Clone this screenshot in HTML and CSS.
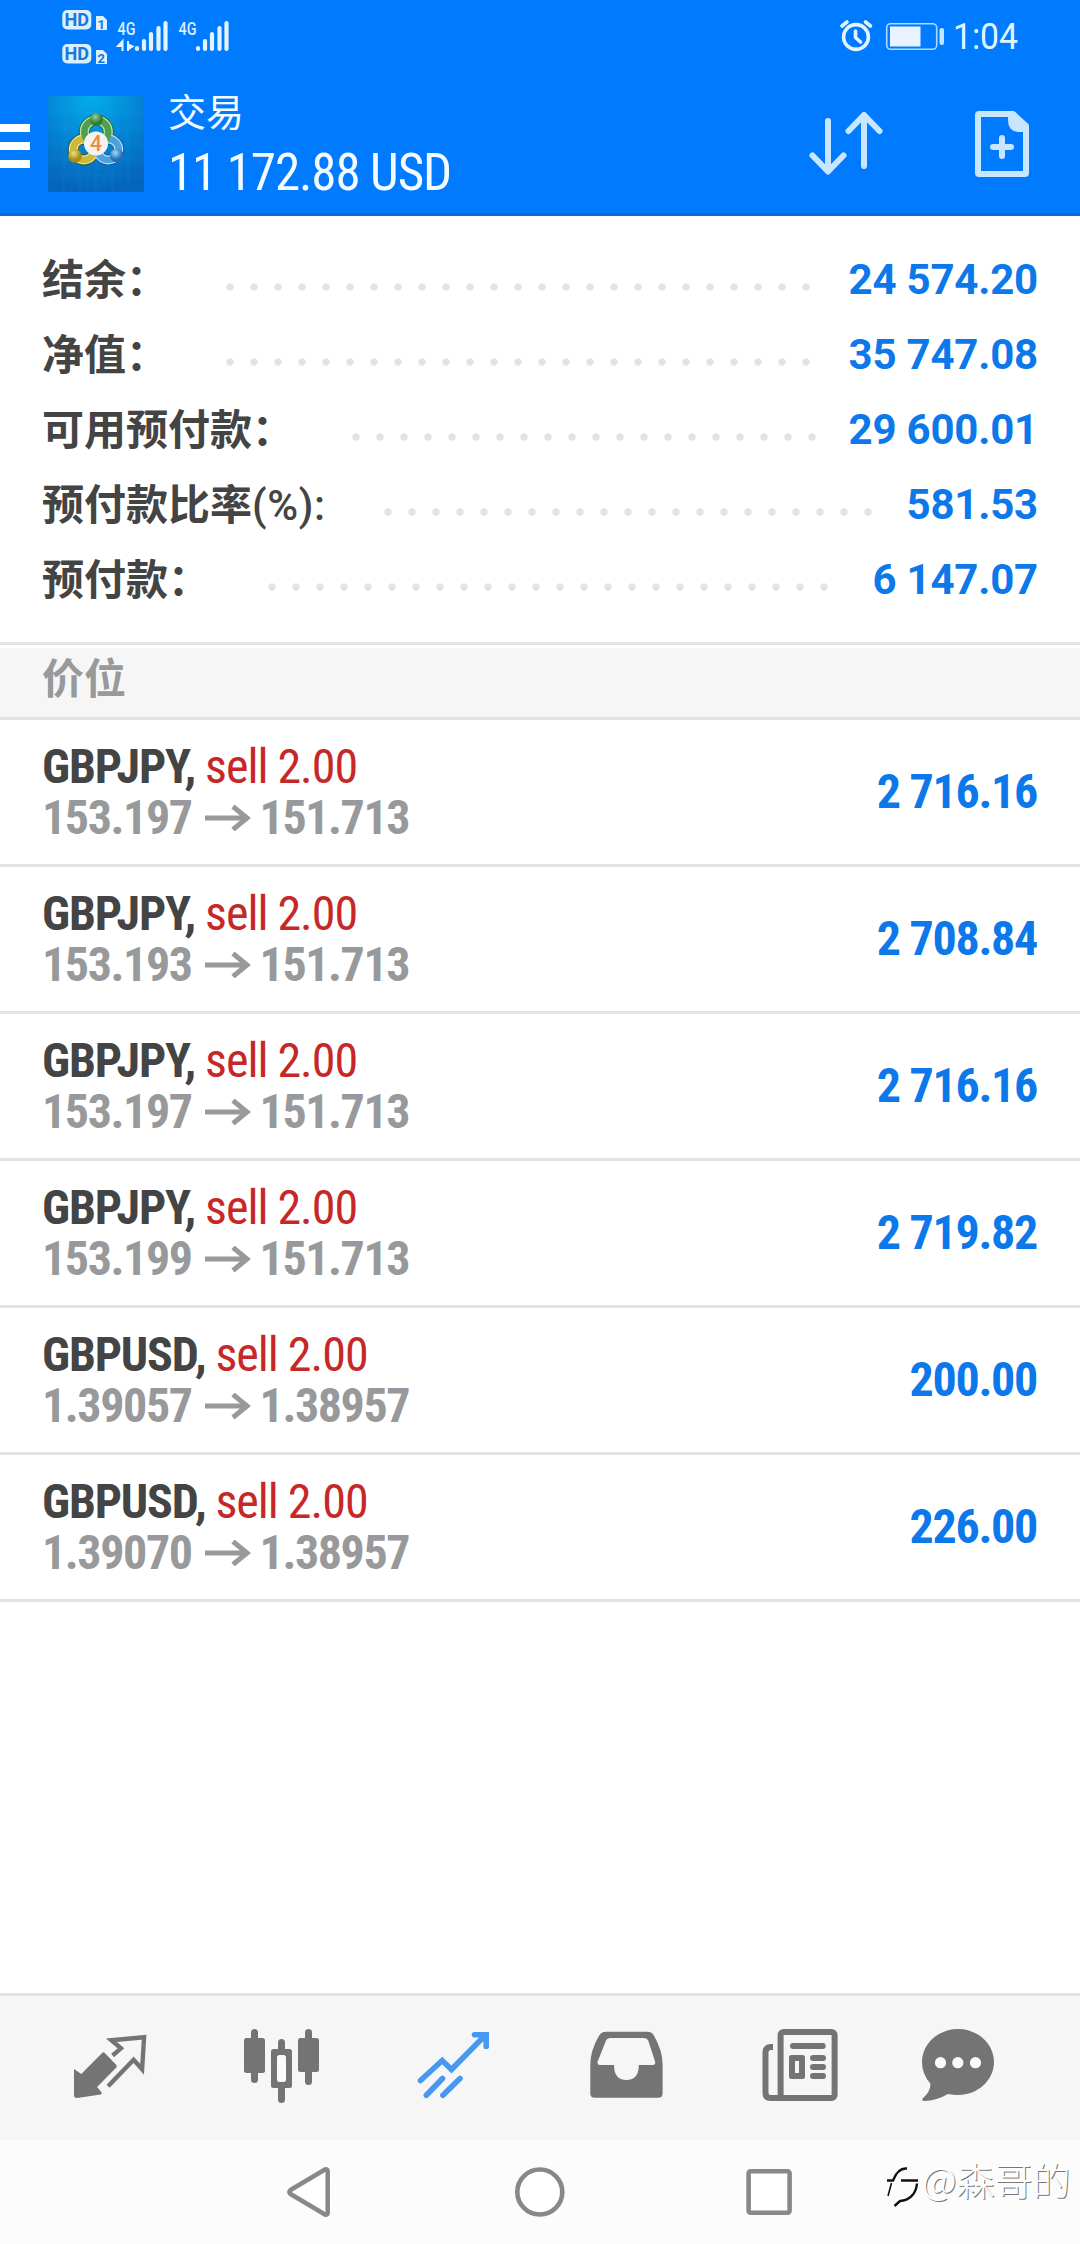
FILE: index.html
```html
<!DOCTYPE html>
<html lang="zh-CN">
<head>
<meta charset="utf-8">
<title>交易</title>
<link rel="stylesheet" href="styles.css">
</head>
<body>
<div class="screen">
  <header class="header">
    <div class="status">
      <svg class="status-left" viewBox="60 0 180 72" width="180" height="72">
        <g fill="#d8f0ff">
          <rect x="62.3" y="10" width="29" height="19.5" rx="5"/>
          <rect x="62.3" y="44" width="29" height="19.5" rx="5"/>
          <path d="M96 16h7l4 4v10H96zM96 50h7l4 4v10H96z"/>
        </g>
        <g class="hd"><text x="64.6" y="26.3" textLength="24.5" lengthAdjust="spacingAndGlyphs">HD</text><text x="64.6" y="60.3" textLength="24.5" lengthAdjust="spacingAndGlyphs">HD</text></g>
        <g class="sim"><text x="97.6" y="28.5">1</text><text x="97.6" y="62.5">2</text></g>
        <g class="net"><text x="117.5" y="34.5" textLength="18" lengthAdjust="spacingAndGlyphs">4G</text><text x="178.5" y="34.5" textLength="18" lengthAdjust="spacingAndGlyphs">4G</text></g>
        <g fill="none" stroke="#e2f5ff" stroke-width="4.2" stroke-linecap="round">
          <path d="M137 48v1M144 41v8M151 34v15M158.500 28v21M165.500 23v26"/>
          <path d="M198 48v1M205 41v8M212 34v15M219.500 28v21M226.500 23v26"/>
        </g>
        <path d="M122.500 51V41l-4.500 5h4.500M128 41v10M128 44.500l4.500 2-4.500 3z" fill="#e2f5ff" stroke="#e2f5ff" stroke-width="2"/>
      </svg>
      <svg class="status-right" viewBox="836 0 190 72" width="190" height="72">
        <g fill="none" stroke="#e2f5ff" stroke-width="3.600" stroke-linecap="round" stroke-linejoin="round">
          <circle cx="856" cy="37" r="12.400"/>
          <path d="M855.500 31v6.500l5 4.500M842 26l5-4M865.500 22l5 4"/>
        </g>
        <rect x="886.700" y="23.700" width="50" height="25.600" rx="4" fill="none" stroke="#a9dcff" stroke-width="1.600"/>
        <rect x="890" y="26.500" width="30.500" height="20" fill="#e8f3ff"/>
        <rect x="939.500" y="28" width="4.500" height="17" rx="2" fill="#c3e6ff"/>
        <text class="clock" x="953" y="49" textLength="65" lengthAdjust="spacingAndGlyphs">1:04</text>
      </svg>
    </div>
    <div class="appbar">
      <svg class="menu" viewBox="0 120 30 52" width="30" height="52"><path d="M0 124h30v8H0zM0 142h30v8H0zM0 160h30v8H0z" fill="#fff"/></svg>
      <svg class="logo" viewBox="48 96 96 96" width="96" height="96">
        <defs>
          <radialGradient id="sky" cx=".45" cy="0" r="1"><stop offset="0" stop-color="#03aeea"/><stop offset=".5" stop-color="#0484d4"/><stop offset="1" stop-color="#0564bb"/></radialGradient>
          <radialGradient id="green" cx=".4" cy=".3"><stop offset="0" stop-color="#9bcf96"/><stop offset="1" stop-color="#2c7e33"/></radialGradient>
          <radialGradient id="gold" cx=".4" cy=".3"><stop offset="0" stop-color="#f0e07a"/><stop offset="1" stop-color="#a58a18"/></radialGradient>
          <radialGradient id="blue" cx=".4" cy=".3"><stop offset="0" stop-color="#a4dafa"/><stop offset="1" stop-color="#1c73b8"/></radialGradient>
        </defs>
        <rect x="48" y="96" width="96" height="96" rx="2" fill="url(#sky)"/>
        <path d="M64 96v96M80 96v96M96 96v96M112 96v96M128 96v96M48 112h96M48 128h96M48 144h96M48 160h96M48 176h96" stroke="#39b8ea" stroke-opacity=".13" fill="none"/>
        <g fill="none" stroke-width="11">
          <circle cx="83.800" cy="149.500" r="10.500" stroke="#2d5a3c"/>
          <circle cx="108.200" cy="149.500" r="10.500" stroke="#155a94"/>
          <circle cx="96.300" cy="132" r="12" stroke="#226b3a"/>
        </g>
        <g fill="none" stroke-width="9">
          <circle cx="83.800" cy="149.500" r="10.500" stroke="#e6e4a0"/>
          <circle cx="108.200" cy="149.500" r="10.500" stroke="#b6e0f7"/>
          <circle cx="96.300" cy="132" r="12" stroke="#bfe0b0"/>
        </g>
        <g fill="none" stroke-width="6.500">
          <circle cx="83.800" cy="149.500" r="10.500" stroke="#cdb83a"/>
          <circle cx="108.200" cy="149.500" r="10.500" stroke="#4aa3dc"/>
          <circle cx="96.300" cy="132" r="12" stroke="#4f9f50"/>
        </g>
        <circle cx="96.500" cy="119.500" r="6.500" fill="url(#green)"/>
        <circle cx="75" cy="156" r="6.800" fill="url(#gold)"/>
        <circle cx="116.700" cy="155.500" r="6.800" fill="url(#blue)"/>
        <circle cx="96" cy="143.500" r="12" fill="#f5f3f2"/>
        <text class="logo-num" x="90" y="151" textLength="12" lengthAdjust="spacingAndGlyphs">4</text>
      </svg>
      <div class="titles">
        <div class="title">交易</div>
        <div class="total cond">11 172.88 USD</div>
      </div>
      <svg class="sort" viewBox="806 108 80 72" width="80" height="72">
        <path d="M828 121v50M812.500 155.500L828 171.500l15.500-16M864 166v-51M848.500 131L864 115l15.500 16" fill="none" stroke="#c9e6ff" stroke-width="6" stroke-linecap="round" stroke-linejoin="round"/>
      </svg>
      <svg class="new" viewBox="970 108 64 72" width="64" height="72">
        <path d="M979 114h34l13 12v47q0 1-1 1h-46q-1 0-1-1v-58q0-1 1-1z" fill="none" stroke="#c9e6ff" stroke-width="6" stroke-linejoin="round"/>
        <path d="M1008 114h6l13 13v5h-9q-10-1-10-12z" fill="#c9e6ff"/>
        <path d="M1002 138v18M993 147h18" stroke="#c9e6ff" stroke-width="6" stroke-linecap="round"/>
      </svg>
    </div>
  </header>

  <section class="summary">
    <div class="line"><span class="label">结余：</span><span class="dots"></span><span class="value">24 574.20</span></div>
    <div class="line"><span class="label">净值：</span><span class="dots"></span><span class="value">35 747.08</span></div>
    <div class="line"><span class="label">可用预付款：</span><span class="dots"></span><span class="value">29 600.01</span></div>
    <div class="line"><span class="label">预付款比率<span class="latin">(%):</span></span><span class="dots"></span><span class="value">581.53</span></div>
    <div class="line"><span class="label">预付款：</span><span class="dots"></span><span class="value">6 147.07</span></div>
  </section>

  <h2 class="section">价位</h2>

  <main class="positions">
    <div class="row"><div class="deal"><div class="name cond">GBPJPY, <span class="sell">sell 2.00</span></div><div class="prices cond">153.197<svg class="arrow" viewBox="0 0 46 26" width="46" height="26"><path d="M0 13H42M28 1.500L42 13 28 24.500"/></svg>151.713</div></div><div class="profit cond">2 716.16</div></div>
    <div class="row"><div class="deal"><div class="name cond">GBPJPY, <span class="sell">sell 2.00</span></div><div class="prices cond">153.193<svg class="arrow" viewBox="0 0 46 26" width="46" height="26"><path d="M0 13H42M28 1.500L42 13 28 24.500"/></svg>151.713</div></div><div class="profit cond">2 708.84</div></div>
    <div class="row"><div class="deal"><div class="name cond">GBPJPY, <span class="sell">sell 2.00</span></div><div class="prices cond">153.197<svg class="arrow" viewBox="0 0 46 26" width="46" height="26"><path d="M0 13H42M28 1.500L42 13 28 24.500"/></svg>151.713</div></div><div class="profit cond">2 716.16</div></div>
    <div class="row"><div class="deal"><div class="name cond">GBPJPY, <span class="sell">sell 2.00</span></div><div class="prices cond">153.199<svg class="arrow" viewBox="0 0 46 26" width="46" height="26"><path d="M0 13H42M28 1.500L42 13 28 24.500"/></svg>151.713</div></div><div class="profit cond">2 719.82</div></div>
    <div class="row"><div class="deal"><div class="name cond">GBPUSD, <span class="sell">sell 2.00</span></div><div class="prices cond">1.39057<svg class="arrow" viewBox="0 0 46 26" width="46" height="26"><path d="M0 13H42M28 1.500L42 13 28 24.500"/></svg>1.38957</div></div><div class="profit cond">200.00</div></div>
    <div class="row"><div class="deal"><div class="name cond">GBPUSD, <span class="sell">sell 2.00</span></div><div class="prices cond">1.39070<svg class="arrow" viewBox="0 0 46 26" width="46" height="26"><path d="M0 13H42M28 1.500L42 13 28 24.500"/></svg>1.38957</div></div><div class="profit cond">226.00</div></div>
  </main>

  <nav class="tabs">
    <svg viewBox="24 1996 172 144"><path d="M74 2069l7.300 5 21.300-21.500q1.200-.6 2.200.6l11.500 12q1.200 1.200 0 2.400l-19.200 19.500 4.500 5.500q.6 1.400-.8 1.900l-23.800 3.600q-3 0-3-3z" fill="#747474"/><path d="M112.600 2055.500l8.300-7.200-9.500-8 32.700-3-2 32-8.500-9.500-25.500 26.500" fill="none" stroke="#747474" stroke-width="4.400"/></svg>
    <svg viewBox="196 1996 172 144"><g fill="#747474"><rect x="244" y="2038" width="21" height="35" rx="2.500"/><rect x="251" y="2029" width="7" height="54" rx="3.500"/><rect x="298" y="2038" width="21" height="34" rx="2.500"/><rect x="305" y="2029" width="7" height="56" rx="3.500"/><rect x="278" y="2039" width="7" height="64" rx="3.500"/><rect x="271" y="2049" width="21" height="39" rx="2.500"/></g><rect x="277" y="2055" width="9" height="27" rx="2.500" fill="#fafafa"/></svg>
    <svg viewBox="368 1996 172 144"><path d="M420.500 2080.500L442.200 2060.500 451.500 2069.500 485.500 2035M474.500 2034.800H486.200V2046.500M426.300 2095.300L442.500 2078.500M442.900 2095.300L460 2078.500" fill="none" stroke="#4698f0" stroke-width="5.600" stroke-linecap="round"/></svg>
    <svg viewBox="540 1996 172 144"><path fill-rule="evenodd" fill="#747474" d="M606 2031.700h41.500q4.500 0 6.500 4 8.600 15 8.600 29v28.500q0 4.500-4.500 4.500h-63.300q-4.500 0-4.500-4.500v-28.500q0-14 8.700-29 2.500-4 7-4zM610 2038q-3 0-4 2.500l-8.500 21.500q-.5 3 2.500 3h14q0 15 12.400 15t12.400-15h14q3 0 2.400-3l-7-21.500q-1-2.500-4-2.500z"/></svg>
    <svg viewBox="712 1996 172 144"><g fill="none" stroke="#747474" stroke-width="6"><rect x="780.600" y="2032" width="54" height="66" rx="3"/><path d="M773 2047h-2q-5.500 0-5.500 5.500V2093q0 5 5 5h12"/></g><g fill="#747474"><rect x="790" y="2043" width="35.700" height="6" rx="3"/><rect x="810" y="2055" width="16" height="6" rx="3"/><rect x="810" y="2064" width="16" height="6" rx="3"/><rect x="810" y="2073" width="16" height="6" rx="3"/><path fill-rule="evenodd" d="M791.500 2055h11q2.500 0 2.500 2.500v19q0 2.500-2.500 2.500h-11q-2.500 0-2.500-2.500v-19q0-2.500 2.500-2.500zM795 2061v12h4v-12z"/></g></svg>
    <svg viewBox="884 1996 172 144"><path fill="#747474" d="M958 2029c20 0 36 15 36 33s-16 33-36 33q-5 0-10-1-11 6.500-24 7-3-.5-1-3 8-7 7.300-14.500Q922 2074 922 2062c0-18 16-33 36-33z"/><g fill="#fafafa"><circle cx="940.500" cy="2062.700" r="5.600"/><circle cx="957.800" cy="2062.700" r="5.600"/><circle cx="975.500" cy="2062.700" r="5.600"/></g></svg>
  </nav>

  <footer class="sysnav">
    <svg viewBox="270 2140 80 104" width="80" height="104"><path d="M290.500 2190l34.500-20.500q2.700-.8 2.700 2v41q0 2.800-2.700 2l-34.500-20.500q-2-2 0-4z" fill="#fff" stroke="#888" stroke-width="4.500" stroke-linejoin="round"/></svg>
    <svg viewBox="500 2140 80 104" width="80" height="104"><circle cx="539.800" cy="2192" r="22.500" fill="#fff" stroke="#888" stroke-width="4.600"/></svg>
    <svg viewBox="730 2140 80 104" width="80" height="104"><rect x="748.600" y="2171.200" width="41" height="41.600" rx="2" fill="#fff" stroke="#888" stroke-width="4.600"/></svg>
    <div class="watermark">
      <svg viewBox="882 2160 40 50" width="40" height="50"><g fill="none" stroke="#111"><path d="M887 2180.500h6q5-13 14-12M901 2180.500h17M917 2183.500c-1 11-8 17-17 17.500l-5.500 5" stroke-width="2.400"/><path d="M891.500 2183l-3.500 13" stroke-width="1.600"/></g></svg>
      <span class="mark-text">@森哥的</span>
    </div>
  </footer>
</div>
</body>
</html>
```
FILE: styles.css
```css
* { box-sizing: border-box; }
body { margin: 0; background: #fff; font-family: Roboto, "Noto Sans CJK SC", sans-serif; }
svg { display: block; flex: none; }

.screen { width: 1080px; height: 2244px; display: flex; flex-direction: column; overflow: hidden; }
.cond { font-family: "Roboto Condensed", Roboto, sans-serif; font-stretch: 75%; white-space: pre; }

/* header */
.header { height: 216px; background: #007aff; border-bottom: 3px solid #0f6bd0; }
.status { height: 72px; display: flex; justify-content: space-between; padding: 0 54px 0 60px; }
.hd text { font: bold 18px Roboto, sans-serif; fill: #1a76e0; }
.sim text { font: bold 13px Roboto, sans-serif; fill: #1a76e0; }
.net text { font: 500 19px Roboto, sans-serif; fill: #d8f0ff; }
.clock { font: 36px Roboto, sans-serif; fill: #e2f5ff; }
.appbar { height: 141px; display: flex; align-items: flex-start; }
.menu { margin-top: 48px; }
.logo { margin: 24px 0 0 18px; }
.logo-num { font: 500 22px Roboto, sans-serif; fill: #f08a3c; }
.titles { margin: 17px auto 0 24px; color: #f4fbff; }
.title { font-size: 38px; line-height: 48px; }
.total { font-size: 51px; line-height: 60px; margin-top: 6px; letter-spacing: -1.1px; }
.sort { margin: 36px 84px 0 0; }
.new { margin: 36px 46px 0 0; }

/* account summary */
.summary { height: 429px; padding: 26px 42px 0; border-bottom: 3px solid #e3e3e3; }
.line { height: 75px; display: flex; align-items: center; font-size: 42px; line-height: 75px; }
.label { height: 75px; padding-bottom: 6px; line-height: 69px; color: #444; font-family: "Noto Sans CJK SC", sans-serif; font-weight: bold; white-space: nowrap; }
.latin { font-family: Roboto, sans-serif; font-weight: 500; letter-spacing: .6px; }
.dots { flex: 1; height: 8px; margin: 15px 28px 0 58px; background: radial-gradient(circle at 4px 4px, #e3e3e3 3.300px, transparent 4.100px) 0 0 / 24px 8px; }
.value { color: #0c78ea; font-weight: bold; letter-spacing: -.2px; }

.section { margin: 3px 0 0; height: 72px; padding: 0 42px; background: #f6f6f6; border-bottom: 3px solid #e3e3e3; color: #97999b; font: bold 42px/55px "Noto Sans CJK SC", sans-serif; }

/* open positions */
.positions { flex: 1; }
.row { height: 147px; padding: 0 42px; display: flex; align-items: center; justify-content: space-between; border-bottom: 3px solid #e3e3e3; }
.deal { font-size: 48px; line-height: 51px; }
.name { color: #444; font-weight: bold; letter-spacing: -1.16px; }
.sell { color: #c62828; font-weight: normal; letter-spacing: -1px; }
.prices { display: flex; align-items: center; color: #97999b; font-weight: bold; letter-spacing: -1.42px; }
.arrow { margin: 0 9px 0 13px; }
.arrow path { fill: none; stroke: #97999b; stroke-width: 5px; }
.profit { margin: 0 1px 2px 0; font-size: 48px; font-weight: bold; color: #0c78ea; letter-spacing: -1.3px; }

/* bottom bars */
.tabs { height: 147px; padding: 0 24px; display: grid; grid-template-columns: repeat(6, 172px); background: #f6f6f6; border-top: 3px solid #e3e3e3; }
.tabs svg { width: 172px; height: 144px; }
.sysnav { position: relative; height: 104px; padding: 0 270px; display: flex; justify-content: space-between; background: #fcfcfc; }
.watermark { position: absolute; left: 882px; top: 14px; display: flex; }
.mark-text { font: 300 38px/50px "Noto Sans CJK SC", sans-serif; color: #fff; text-shadow: 1px 1px 0 #777; white-space: nowrap; }
.watermark svg { margin-top: 6px; }
```
